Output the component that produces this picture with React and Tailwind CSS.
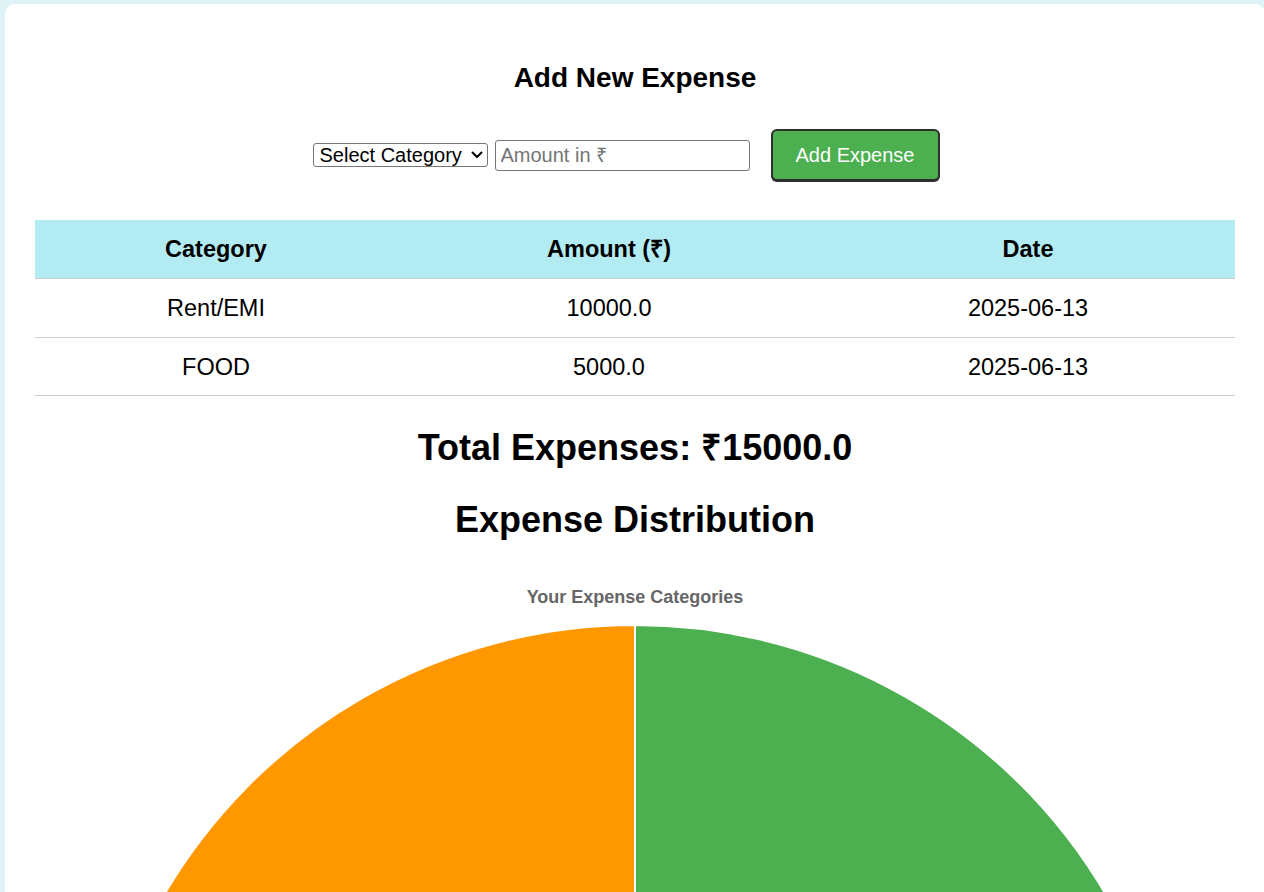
import React from 'react';

const rows = [
  { category: 'Rent/EMI', amount: '10000.0', date: '2025-06-13' },
  { category: 'FOOD', amount: '5000.0', date: '2025-06-13' },
];

const ExpensePie = () => (
  <svg width="1096" height="1096" viewBox="0 0 1096 1096" className="block shrink-0">
    {/* Rent/EMI – 2/3 */}
    <path d="M548 548 L548 2 A546 546 0 1 1 75.15 821 Z" fill="#4caf50" stroke="#ffffff" strokeWidth="2" />
    {/* FOOD – 1/3 */}
    <path d="M548 548 L75.15 821 A546 546 0 0 1 548 2 Z" fill="#ff9800" stroke="#ffffff" strokeWidth="2" />
  </svg>
);

export default function App() {
  return (
    <div className="min-h-screen w-full overflow-hidden bg-[#dff3f6] pt-[4px] font-['Liberation_Sans',Arial,sans-serif] text-black">
      <div className="ml-[5px] w-[1260px] rounded-[10px] bg-white px-[30px] pt-[58px] pb-10">
        {/* Form */}
        <h2 className="text-center text-[28px] leading-[32px] font-bold">Add New Expense</h2>

        <div className="mt-[35px] flex items-center justify-center">
          <div className="relative h-[24px] w-[175px]">
            <select
              defaultValue=""
              className="h-full w-full appearance-none rounded-[3px] border border-[#767676] bg-white pl-[6px] text-[20px] leading-[22px] text-black"
            >
              <option value="">Select Category</option>
              <option>Rent/EMI</option>
              <option>FOOD</option>
            </select>
            <svg
              className="pointer-events-none absolute right-[5px] top-[8px]"
              width="12"
              height="8"
              viewBox="0 0 12 8"
            >
              <path d="M1.5 1.5 L6 6 L10.5 1.5" fill="none" stroke="#000" strokeWidth="2" strokeLinecap="round" strokeLinejoin="round" />
            </svg>
          </div>
          <input
            type="text"
            placeholder="Amount in ₹"
            className="ml-[7px] h-[31px] w-[255px] rounded-[3px] border border-[#767676] bg-white px-[5px] text-[20px] placeholder:text-[#757575]"
          />
          <button className="mr-[18px] ml-[21px] h-[52px] w-[169px] rounded-[6px] border-2 border-[#2e2e2e] bg-[#4caf50] text-[20px] text-white shadow-[0_1px_0_#2e2e2e]">
            Add Expense
          </button>
        </div>

        {/* Table */}
        <div className="mt-[39px] w-[1200px] text-[23.5px]">
          <div className="grid h-[58px] grid-cols-[362px_424px_414px] items-center bg-[#b2ebf2] pt-[1px] font-bold">
            <div className="text-center">Category</div>
            <div className="text-center">Amount (₹)</div>
            <div className="text-center">Date</div>
          </div>
          {rows.map((r) => (
            <div
              key={r.category}
              className="grid h-[59px] grid-cols-[362px_424px_414px] items-center border-t border-[#cccccc] pt-[2px] last:border-b"
            >
              <div className="text-center">{r.category}</div>
              <div className="text-center">{r.amount}</div>
              <div className="text-center">{r.date}</div>
            </div>
          ))}
        </div>

        <h1 className="mt-[31px] text-center text-[36px] leading-[42px] font-bold">Total Expenses: ₹15000.0</h1>
        <h2 className="mt-[30px] text-center text-[36px] leading-[42px] font-bold">Expense Distribution</h2>

        {/* Chart */}
        <p className="mt-[45px] text-center text-[18px] leading-[22px] font-bold text-[#666666]">Your Expense Categories</p>
        <div className="mt-[15px] flex justify-center">
          <ExpensePie />
        </div>
      </div>
    </div>
  );
}
